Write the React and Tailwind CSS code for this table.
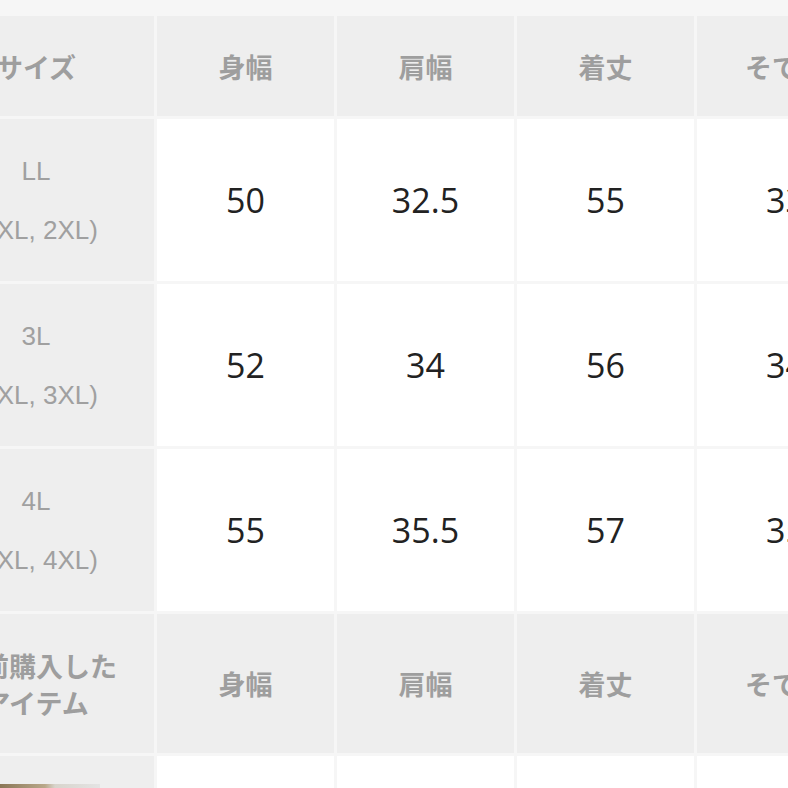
import React from "react";

const cols = ["身幅", "肩幅", "着丈", "そで丈"];
const rows = [
  { size: "LL", alt: "(XL, 2XL)", vals: ["50", "32.5", "55", "33"] },
  { size: "3L", alt: "(XL, 3XL)", vals: ["52", "34", "56", "34"] },
  { size: "4L", alt: "(XL, 4XL)", vals: ["55", "35.5", "57", "35"] },
];

const head = "flex items-center justify-center bg-[#eeeeee] text-[#9e9e9e] font-bold text-[27px] leading-[37px] [font-family:'Noto_Sans_CJK_JP','Noto_Sans',sans-serif]";
const num = "flex items-center justify-center bg-white text-[#222222] text-[34px] [font-family:'Open_Sans',sans-serif]";

export default function App() {
  return (
    <div className="w-[788px] h-[788px] overflow-hidden bg-[#f6f6f6] pt-[16px]">
      <div className="ml-[-82px] grid grid-cols-[236px_177px_177px_177px_177px] grid-rows-[100px_162px_162px_162px_139px_100px] gap-[3px] w-max">
        <div className={head}>サイズ</div>
        {cols.map((c) => (
          <div key={c} className={head}>{c}</div>
        ))}
        {rows.map((r) => (
          <React.Fragment key={r.size}>
            <div className="flex flex-col items-center justify-center gap-[25px] bg-[#eeeeee] text-[#a0a0a0] text-[26px] leading-[34px] [font-family:'Liberation_Sans',Arial,sans-serif]">
              <div>{r.size}</div>
              <div className="pl-[14px]">{r.alt}</div>
            </div>
            {r.vals.map((v, i) => (
              <div key={i} className={num}>{v}</div>
            ))}
          </React.Fragment>
        ))}
        <div className={head + " flex-col"}>
          <div>以前購入した</div>
          <div>アイテム</div>
        </div>
        {cols.map((c) => (
          <div key={"b" + c} className={head}>{c}</div>
        ))}
        <div className="bg-[#eeeeee] flex flex-col">
          <div className="ml-[82px] mt-[28px] h-[40px] w-[100px] bg-[linear-gradient(90deg,#8a7656,#b9a88a_45%,#d8d4cc_55%,#e4e4e4)]" />
        </div>
        <div className="bg-white" />
        <div className="bg-white" />
        <div className="bg-white" />
        <div className="bg-white" />
      </div>
    </div>
  );
}
